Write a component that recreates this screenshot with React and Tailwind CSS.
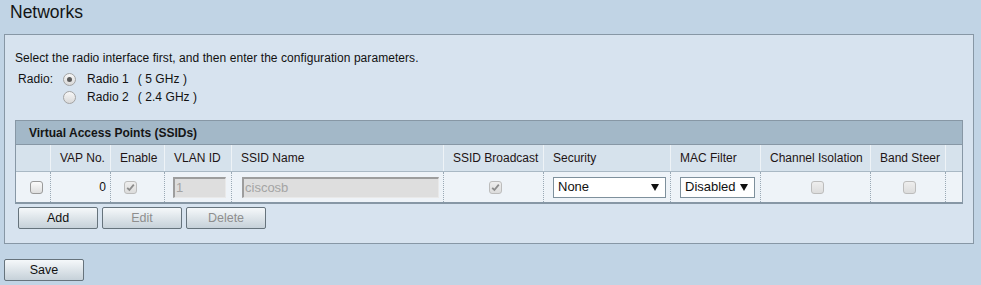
import React from "react";

const cols = "grid-cols-[35px_60px_54px_67px_212px_100px_127px_90px_110px_75px_1fr]";

function Check({ checked, disabled }) {
  return (
    <span
      className={
        "inline-flex items-center justify-center w-[13px] h-[13px] rounded-[3px] border " +
        (disabled
          ? "border-[#bcbcbc] bg-linear-to-b from-[#eeeeee] to-[#dcdcdc]"
          : "border-[#9a9a9a] bg-linear-to-b from-[#fbfbfb] to-[#dedede]")
      }
    >
      {checked && (
        <svg width="9" height="9" viewBox="0 0 9 9">
          <path d="M1.2 4.8 L3.4 7 L7.8 1.6" fill="none" stroke="#8c8c8c" strokeWidth="1.8" />
        </svg>
      )}
    </span>
  );
}

function Radio({ checked }) {
  return (
    <span className="inline-flex items-center justify-center w-[13px] h-[13px] rounded-full border border-[#a3a3a3] bg-linear-to-b from-[#f7f7f7] to-[#d9d9d9]">
      {checked && <span className="w-[5px] h-[5px] rounded-full bg-[#5a5a5a]" />}
    </span>
  );
}

function Btn({ children, disabled }) {
  return (
    <button
      className={
        "w-[80px] h-[22px] rounded-[2px] border border-[#66737c] bg-linear-to-b from-[#f5f8fa] to-[#c6d1d9] text-[12.5px] leading-[20px] " +
        (disabled ? "text-[#8e8e8e]" : "text-[#111]")
      }
    >
      {children}
    </button>
  );
}

function Select({ w, text }) {
  return (
    <div
      className={
        "h-[21px] border border-[#7e909c] bg-white flex items-center justify-between pl-[4px] pr-[6px] text-[13px] text-[#111] " +
        w
      }
    >
      <span>{text}</span>
      <svg width="8" height="7" viewBox="0 0 8 7">
        <path d="M0 0 H8 L4 7 Z" fill="#111" />
      </svg>
    </div>
  );
}

export default function App() {
  const headers = [
    "",
    "VAP No.",
    "Enable",
    "VLAN ID",
    "SSID Name",
    "SSID Broadcast",
    "Security",
    "MAC Filter",
    "Channel Isolation",
    "Band Steer",
    "",
  ];
  return (
    <div
      className="w-[981px] h-[285px] bg-[#c1d4e5] overflow-hidden text-[#111]"
      style={{ fontFamily: '"Liberation Sans", Arial, sans-serif' }}
    >
      <div className="h-[34px] pl-[10px] pt-[2px] text-[17.5px] leading-[20px] text-[#141414]">Networks</div>

      <div className="ml-[4px] w-[970px] h-[210px] border border-[#8797a5] bg-[#d7e3ef] pt-[16px]">
        <div className="pl-[10px] text-[12px] leading-[14px] tracking-[0.06px]">
          Select the radio interface first, and then enter the configuration parameters.
        </div>
        <div className="mt-[7px] pl-[13px] flex text-[12px] leading-[14px] tracking-[0.06px]">
          <div className="w-[45px]">Radio:</div>
          <div className="flex flex-col gap-[4px]">
            <div className="flex items-center">
              <Radio checked />
              <span className="ml-[11px]">Radio 1</span>
              <span className="ml-[9px]">( 5 GHz )</span>
            </div>
            <div className="flex items-center">
              <Radio />
              <span className="ml-[11px]">Radio 2</span>
              <span className="ml-[9px]">( 2.4 GHz )</span>
            </div>
          </div>
        </div>

        <div className="ml-[10px] mt-[16px] w-[948px] border border-[#8797a5] border-b-2">
          <div className="h-[24px] bg-[#a3b8c8] border-b border-[#8797a5] pl-[13px] flex items-center text-[12px] font-bold text-[#151515]">
            Virtual Access Points (SSIDs)
          </div>
          <div className={"grid h-[27px] bg-[#d6e2ec] border-b border-[#a9b8c4] text-[12px] text-[#1e1414] " + cols}>
            {headers.map((h, i) => (
              <div
                key={i}
                className={
                  "flex items-center pl-[9px] whitespace-nowrap " +
                  (i < headers.length - 1 ? "border-r border-[#eef3f7]" : "")
                }
              >
                {h}
              </div>
            ))}
          </div>
          <div className={"grid h-[30px] bg-[#eef3f8] text-[12px] " + cols}>
            <div className="flex items-center pl-[14px] border-r border-dotted border-[#9aa9b5]">
              <Check />
            </div>
            <div className="flex items-center justify-end pr-[4px] border-r border-dotted border-[#9aa9b5]">0</div>
            <div className="flex items-center pl-[13px] border-r border-dotted border-[#9aa9b5]">
              <Check checked disabled />
            </div>
            <div className="flex items-center pl-[8px] border-r border-dotted border-[#9aa9b5]">
              <div className="w-[53px] h-[21px] bg-[#dedede] border-t-2 border-l-2 border-t-[#9d9d9d] border-l-[#9d9d9d] border-r border-b border-r-[#e9e9e9] border-b-[#e9e9e9] pl-[1px] text-[13px] leading-[18px] text-[#a4a4a4]">
                1
              </div>
            </div>
            <div className="flex items-center pl-[10px] border-r border-dotted border-[#9aa9b5]">
              <div className="w-[197px] h-[21px] bg-[#dedede] border-t-2 border-l-2 border-t-[#9d9d9d] border-l-[#9d9d9d] border-r border-b border-r-[#e9e9e9] border-b-[#e9e9e9] pl-[1px] text-[13px] leading-[18px] text-[#a4a4a4]">
                ciscosb
              </div>
            </div>
            <div className="flex items-center justify-center pl-[3px] border-r border-dotted border-[#9aa9b5]">
              <Check checked disabled />
            </div>
            <div className="flex items-center pl-[9px] border-r border-dotted border-[#9aa9b5]">
              <Select w="w-[113px]" text="None" />
            </div>
            <div className="flex items-center pl-[9px] border-r border-dotted border-[#9aa9b5]">
              <Select w="w-[75px]" text="Disabled" />
            </div>
            <div className="flex items-center justify-center pl-[3px] border-r border-dotted border-[#9aa9b5]">
              <Check disabled />
            </div>
            <div className="flex items-center justify-center pl-[3px] border-r border-dotted border-[#9aa9b5]">
              <Check disabled />
            </div>
            <div />
          </div>
        </div>

        <div className="ml-[13px] mt-[3px] flex gap-[4px]">
          <Btn>Add</Btn>
          <Btn disabled>Edit</Btn>
          <Btn disabled>Delete</Btn>
        </div>
      </div>

      <div className="ml-[4px] mt-[13px]">
        <Btn>Save</Btn>
      </div>
    </div>
  );
}
